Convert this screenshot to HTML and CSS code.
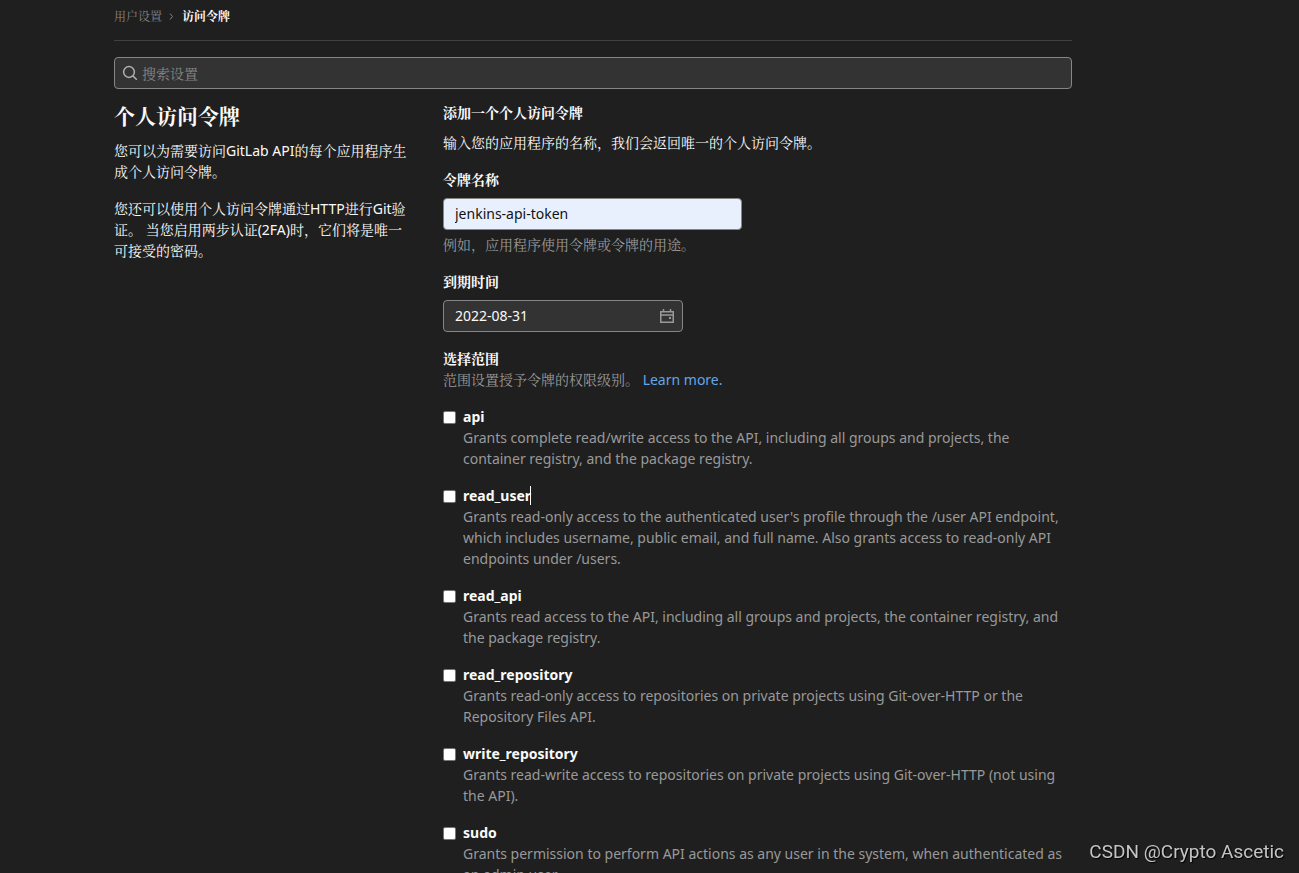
FILE: index.html
```html
<!DOCTYPE html>
<html lang="zh-CN">
<head>
<meta charset="utf-8">
<meta name="viewport" content="width=device-width, initial-scale=1">
<title>访问令牌</title>
<link rel="stylesheet" href="styles.css">
</head>
<body>
<main class="container">
  <nav class="breadcrumbs" aria-label="Breadcrumbs">
    <a class="crumb" href="#">用户设置</a>
    <svg class="chevron" viewBox="0 0 8 8" aria-hidden="true"><path d="M2 1.5 4.5 4.5 2 7.5"/></svg>
    <a class="crumb crumb-current" href="#" aria-current="page">访问令牌</a>
  </nav>

  <div class="search">
    <svg class="search-icon" viewBox="0 0 16 16" aria-hidden="true"><circle cx="7" cy="7" r="5.4"/><path d="M11 11 14.3 14.3"/></svg>
    <input class="field search-input" type="search" placeholder="搜索设置" aria-label="搜索设置">
  </div>

  <div class="row">
    <section class="intro">
      <h1 class="page-title">个人访问令牌</h1>
      <p class="text">您可以为需要访问GitLab API的每个应用程序生成个人访问令牌。</p>
      <p class="text">您还可以使用个人访问令牌通过HTTP进行Git验证。 当您启用两步认证(2FA)时，它们将是唯一可接受的密码。</p>
    </section>

    <form class="token-form">
      <h2 class="form-title">添加一个个人访问令牌</h2>
      <p class="text">输入您的应用程序的名称，我们会返回唯一的个人访问令牌。</p>

      <div class="group">
        <label class="label" for="token-name">令牌名称</label>
        <input class="field form-input name-input" id="token-name" type="text" value="jenkins-api-token" aria-describedby="name-help">
        <p class="help name-help" id="name-help">例如，应用程序使用令牌或令牌的用途。</p>
      </div>

      <div class="group">
        <label class="label" for="expires">到期时间</label>
        <div class="date">
          <input class="field form-input" id="expires" type="text" value="2022-08-31">
          <svg class="date-icon" viewBox="0 0 16 16" aria-hidden="true"><path d="M1.75 3.75h12.5v10.5H1.75zM2 7h12M4.5 1v3M11.5 1v3"/><path class="date-dot" d="M10 9h2v2h-2z"/></svg>
        </div>
      </div>

      <fieldset class="scopes">
        <legend class="legend">选择范围</legend>
        <p class="help">范围设置授予令牌的权限级别。 <a class="link" href="#">Learn more.</a></p>

        <div class="scope">
          <input class="check" type="checkbox" id="scope-api">
          <label class="scope-name" for="scope-api">api</label>
          <p class="help scope-help">Grants complete read/write access to the API, including all groups and projects, the container registry, and the package registry.</p>
        </div>
        <div class="scope">
          <input class="check" type="checkbox" id="scope-read-user">
          <label class="scope-name" for="scope-read-user">read_user<span class="caret"></span></label>
          <p class="help scope-help">Grants read-only access to the authenticated user's profile through the /user API endpoint, which includes username, public email, and full name. Also grants access to read-only API endpoints under /users.</p>
        </div>
        <div class="scope">
          <input class="check" type="checkbox" id="scope-read-api">
          <label class="scope-name" for="scope-read-api">read_api</label>
          <p class="help scope-help">Grants read access to the API, including all groups and projects, the container registry, and the package registry.</p>
        </div>
        <div class="scope">
          <input class="check" type="checkbox" id="scope-read-repository">
          <label class="scope-name" for="scope-read-repository">read_repository</label>
          <p class="help scope-help">Grants read-only access to repositories on private projects using Git-over-HTTP or the Repository Files API.</p>
        </div>
        <div class="scope">
          <input class="check" type="checkbox" id="scope-write-repository">
          <label class="scope-name" for="scope-write-repository">write_repository</label>
          <p class="help scope-help">Grants read-write access to repositories on private projects using Git-over-HTTP (not using the API).</p>
        </div>
        <div class="scope">
          <input class="check" type="checkbox" id="scope-sudo">
          <label class="scope-name" for="scope-sudo">sudo</label>
          <p class="help scope-help">Grants permission to perform API actions as any user in the system, when authenticated as an admin user.</p>
        </div>
      </fieldset>
    </form>
  </div>
</main>
<div class="watermark">CSDN @Crypto Ascetic</div>
</body>
</html>
```

FILE: styles.css
```css
* {
  box-sizing: border-box;
}

body {
  margin: 0;
  height: 100vh;
  overflow: hidden;
  background: #1f1f1f;
  color: #fafafa;
  font: 14px/21px "Noto Sans", "Noto Serif CJK SC", "Noto Sans CJK SC", sans-serif;
}

h1, h2, p {
  margin: 0;
}

.container {
  max-width: 990px;
  margin-left: max(0px, round(up, 50vw - 552px, 1px));
  padding: 0 16px;
}

.breadcrumbs {
  display: flex;
  align-items: center;
  gap: 6px;
  height: 41px;
  padding-bottom: 8px;
  border-bottom: 1px solid #404040;
  font-size: 12px;
}

.crumb {
  color: #868686;
  text-decoration: none;
}

.crumb-current {
  color: #fafafa;
  font-weight: 700;
}

.chevron {
  width: 8px;
  height: 8px;
  fill: none;
  stroke: #868686;
}

.field {
  display: block;
  width: 100%;
  height: 32px;
  padding: 0 11px;
  border: 1px solid #868686;
  border-radius: 4px;
  background: #333;
  color: #fafafa;
  font: inherit;
}

.search {
  position: relative;
  margin-top: 16px;
}

.search-input {
  padding-left: 27px;
}

.search-input::placeholder {
  color: #868686;
}

.search-icon {
  position: absolute;
  top: 8px;
  left: 8px;
  width: 16px;
  height: 16px;
  fill: none;
  stroke: #b0b0b0;
  stroke-width: 1.5;
  stroke-linecap: round;
}

.row {
  display: grid;
  grid-template-columns: 299fr 629fr;
  gap: 30px;
  margin-top: 13px;
}

.intro {
  display: grid;
  align-content: start;
  gap: 16px;
}

.page-title {
  margin-bottom: -6px;
  font-size: 21px;
  line-height: 28px;
  font-weight: 700;
}

.form-title {
  margin-bottom: 9px;
  font-size: 14px;
  line-height: 21px;
  font-weight: 700;
}

.group {
  margin-top: 16px;
}

.label {
  display: block;
  margin-bottom: 8px;
  font-weight: 700;
}

.form-input {
  padding-bottom: 2px;
}

.name-input {
  width: 299px;
  max-width: 100%;
  background: #e8f0fe;
  color: #111;
}

.help {
  color: #999;
}

.name-help {
  margin-top: 4px;
}

.date {
  position: relative;
  width: 240px;
}

.date-icon {
  position: absolute;
  top: 8px;
  right: 8px;
  width: 16px;
  height: 16px;
  fill: none;
  stroke: #999;
  stroke-width: 1.5;
}

.date-dot {
  fill: #999;
  stroke: none;
}

.scopes {
  margin: 16px 0 0;
  padding: 0;
  border: 0;
}

.legend {
  padding: 0;
  font-weight: 700;
}

.link {
  color: #63a6e9;
  text-decoration: none;
}

.scope {
  display: grid;
  grid-template-columns: 13px 1fr;
  column-gap: 7px;
  align-items: center;
  margin-top: 16px;
}

.check {
  appearance: none;
  width: 13px;
  height: 13px;
  margin: 2px 0 0;
  border: 1px solid #767676;
  border-radius: 2px;
  background: #fff;
}

.check:checked {
  background: #63a6e9;
}

.scope-name {
  justify-self: start;
  position: relative;
  font-weight: 700;
}

.caret {
  position: absolute;
  top: 1px;
  right: 0;
  width: 1px;
  height: 19px;
  background: #fff;
}

.scope-help {
  grid-column: 2;
}

.watermark {
  position: fixed;
  right: 15px;
  bottom: 9px;
  color: #c4c4c4;
  font: 19px/24px Roboto, "Liberation Sans", sans-serif;
  text-shadow: 1px 1px 1px #000;
}
```
